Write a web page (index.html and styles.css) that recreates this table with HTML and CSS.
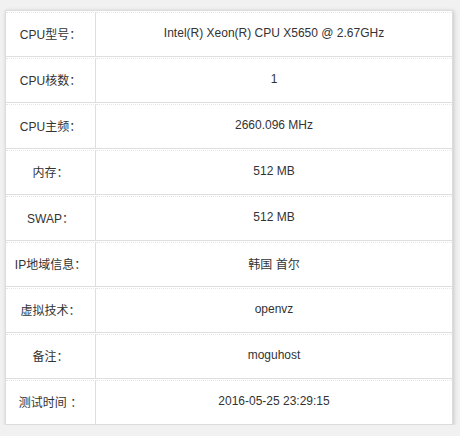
FILE: index.html
```html
<!DOCTYPE html>
<html lang="zh-CN">
<head>
    <meta charset="UTF-8">
    <title>服务器信息</title>
    <link rel="stylesheet" href="styles.css">
</head>
<body>
    <div class="info-card">
        <div class="info-row">
            <div class="info-label">CPU型号：</div>
            <div class="info-value">Intel(R) Xeon(R) CPU X5650 @ 2.67GHz</div>
        </div>
        <div class="info-row">
            <div class="info-label">CPU核数：</div>
            <div class="info-value">1</div>
        </div>
        <div class="info-row">
            <div class="info-label">CPU主频：</div>
            <div class="info-value">2660.096 MHz</div>
        </div>
        <div class="info-row">
            <div class="info-label">内存：</div>
            <div class="info-value">512 MB</div>
        </div>
        <div class="info-row">
            <div class="info-label">SWAP：</div>
            <div class="info-value">512 MB</div>
        </div>
        <div class="info-row">
            <div class="info-label">IP地域信息：</div>
            <div class="info-value">韩国 首尔</div>
        </div>
        <div class="info-row">
            <div class="info-label">虚拟技术：</div>
            <div class="info-value">openvz</div>
        </div>
        <div class="info-row">
            <div class="info-label">备注：</div>
            <div class="info-value">moguhost</div>
        </div>
        <div class="info-row">
            <div class="info-label">测试时间 ：</div>
            <div class="info-value">2016-05-25 23:29:15</div>
        </div>
    </div>
</body>
</html>
```

FILE: styles.css
```css
body {
    margin: 0;
    padding: 10px 0 0 5px;
    background-color: #f1f1f1;
    font-family: "Liberation Sans", Arial, "Noto Sans CJK SC", sans-serif;
    font-size: 12px;
    color: #333;
}

.info-card {
    width: 448px;
    box-sizing: border-box;
    background-color: #fff;
    border: 1px solid #dcdcdc;
    box-shadow: 1px 1px 4px rgba(0, 0, 0, 0.18);
}

.info-row {
    display: flex;
    padding-top: 1px;
    border-top: 1px solid #dedede;
}

.info-row:first-child {
    border-top: none;
}

.info-label,
.info-value {
    box-sizing: border-box;
    height: 44px;
    padding-bottom: 3px;
    display: flex;
    align-items: center;
    justify-content: center;
    border-top: 1px dotted #e6e6e6;
}

.info-label {
    width: 90px;
    border-right: 1px solid #dedede;
}

.info-value {
    flex: 1;
}
```
